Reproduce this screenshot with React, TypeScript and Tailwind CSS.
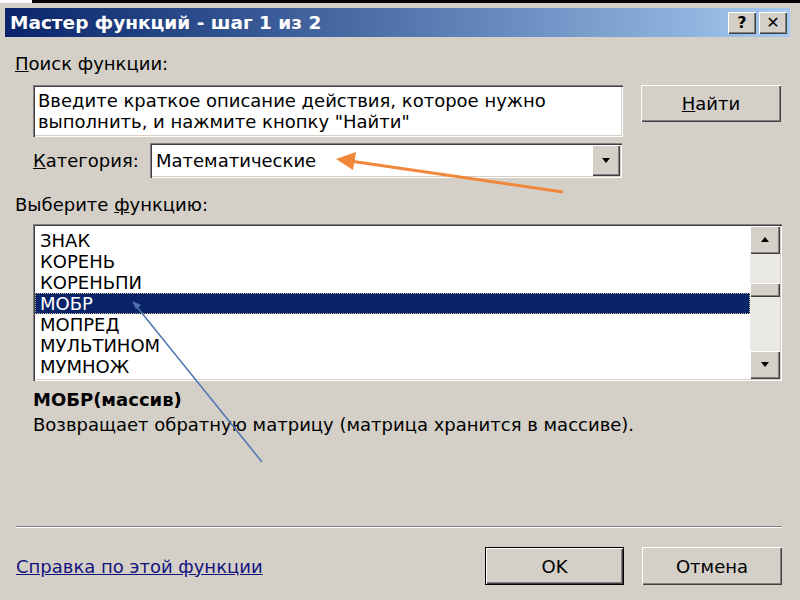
import React from "react";

const functions = ["ЗНАК", "КОРЕНЬ", "КОРЕНЬПИ", "МОБР", "МОПРЕД", "МУЛЬТИНОМ", "МУМНОЖ"];

const raised =
  "bg-[#d4d0c8] shadow-[inset_1px_1px_0_#ffffff,inset_-1px_-1px_0_#404040,inset_-2px_-2px_0_#808080]";
const sunken =
  "bg-white shadow-[inset_1px_1px_0_#808080,inset_2px_2px_0_#404040,inset_-1px_-1px_0_#ffffff,inset_-2px_-2px_0_#d4d0c8]";

function Arrow({ down }: { down?: boolean }) {
  return (
    <svg width="10" height="6" viewBox="0 0 10 6">
      <polygon points={down ? "1,0 9,0 5,5" : "1,5 9,5 5,0"} fill="#000" />
    </svg>
  );
}

export default function App() {
  const selected = "МОБР";

  return (
    <div className="relative w-[800px] h-[600px] overflow-hidden bg-[#d4d0c8] text-black font-['DejaVu_Sans',sans-serif]">
      {/* strip above the window */}
      <div className="flex h-[3px]">
        <div className="w-[32px] bg-white" />
        <div className="flex-1 bg-black" />
      </div>

      <div className="pl-[5px] pr-[10px] pt-[5px]">
        {/* title bar */}
        <div className="flex h-[29px] items-center justify-between bg-gradient-to-r from-[#0a246a] to-[#a6caf0] pl-[5px] pr-[3px]">
          <span className="text-[18.5px] font-bold text-white">Мастер функций - шаг 1 из 2</span>
          <div className="flex gap-[3px]">
            <div className={`${raised} flex h-[22px] w-[28px] items-center justify-center text-[16px] font-bold`}>?</div>
            <div className={`${raised} flex h-[22px] w-[28px] items-center justify-center text-[16px] font-bold`}>✕</div>
          </div>
        </div>
      </div>

      <div className="pl-[15px] pr-[18px] text-[18px]">
        <div className="mt-[17px] leading-[20px]">
          <span className="underline">П</span>оиск функции:
        </div>

        <div className="mt-[11px] flex items-start pl-[18px]">
          <div className={`${sunken} h-[52px] w-[590px] px-[5px] pt-[5px] leading-[21px]`}>
            Введите краткое описание действия, которое нужно
            <br />
            выполнить, и нажмите кнопку "Найти"
          </div>
          <div className={`${raised} ml-[18px] flex h-[37px] w-[140px] items-center justify-center`}>
            <span>
              <span className="underline">Н</span>айти
            </span>
          </div>
        </div>

        <div className="mt-[6px] flex items-center pl-[18px]">
          <span className="w-[117px]">
            <span className="underline">К</span>атегория:
          </span>
          <div className={`${sunken} flex h-[35px] w-[472px] items-center justify-between pl-[6px] pr-[2px]`}>
            <span>Математические</span>
            <div className={`${raised} flex h-[31px] w-[28px] items-center justify-center`}>
              <Arrow down />
            </div>
          </div>
        </div>

        <div className="mt-[17px] leading-[20px]">
          Выберите <span className="underline">ф</span>ункцию:
        </div>

        <div className={`${sunken} ml-[18px] mt-[9px] flex h-[157px] w-[749px] p-[2px]`}>
          <div className="flex-1 pt-[4px]">
            {functions.map((f) => (
              <div
                key={f}
                className={
                  f === selected
                    ? "h-[21px] bg-[#0a246a] pl-[5px] leading-[21px] text-white outline-1 outline-dotted outline-[#c9b98a] -outline-offset-1"
                    : "h-[21px] pl-[5px] leading-[21px]"
                }
              >
                {f}
              </div>
            ))}
          </div>
          <div className="flex w-[30px] flex-col bg-[#ebe9e3]">
            <div className={`${raised} flex h-[28px] items-center justify-center`}>
              <Arrow />
            </div>
            <div className="h-[29px]" />
            <div className={`${raised} h-[14px]`} />
            <div className="flex-1" />
            <div className={`${raised} flex h-[28px] items-center justify-center`}>
              <Arrow down />
            </div>
          </div>
        </div>

        <div className="mt-[9px] pl-[18px] font-bold leading-[20px]">МОБР(массив)</div>
        <div className="mt-[5px] pl-[18px] leading-[20px]">
          Возвращает обратную матрицу (матрица хранится в массиве).
        </div>

        <div className="ml-[1px] mt-[91px] h-[2px] w-[766px] border-t border-b border-t-[#808080] border-b-white" />

        <div className="mt-[19px] flex items-center">
          <a className="flex-1 pl-[1px] text-[#14147f] underline">Справка по этой функции</a>
          <div className="border border-black">
            <div className={`${raised} flex h-[36px] w-[137px] items-center justify-center`}>OK</div>
          </div>
          <div className={`${raised} ml-[18px] flex h-[38px] w-[140px] items-center justify-center`}>Отмена</div>
        </div>
      </div>

      {/* annotation arrows drawn over the dialog */}
      <svg className="pointer-events-none absolute inset-0" width="800" height="600">
        <line x1="563" y1="192" x2="350" y2="161" stroke="#f0873a" strokeWidth="3" />
        <polygon points="336,159 356,152 353,170" fill="#f0873a" />
        <line x1="262" y1="462" x2="137" y2="307" stroke="#4f76b0" strokeWidth="1.5" />
        <polygon points="132,301 141,305 136,309" fill="#4f76b0" />
      </svg>
    </div>
  );
}
